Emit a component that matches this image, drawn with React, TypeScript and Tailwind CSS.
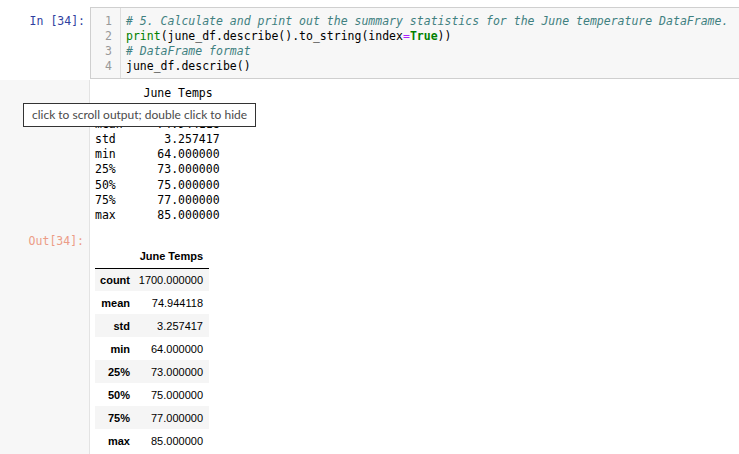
const MONO = { fontFamily: '"DejaVu Sans Mono", "Liberation Mono", monospace' };

const STATS: [string, string][] = [
  ['count', '1700.000000'],
  ['mean', '74.944118'],
  ['std', '3.257417'],
  ['min', '64.000000'],
  ['25%', '73.000000'],
  ['50%', '75.000000'],
  ['75%', '77.000000'],
  ['max', '85.000000'],
];

// pandas to_string() style text block
const TEXT_OUT = [
  '       June Temps',
  ...STATS.map(([k, v]) => k.padEnd(5, ' ') + v.padStart(13, ' ')),
].join('\n');

function CodeCell() {
  return (
    <div className="flex w-[745px] pt-[7px]">
      <div
        className="w-[90px] shrink-0 pr-[5px] pt-[6.5px] text-right text-[11.5px] leading-[15px] text-[#303F9F]"
        style={MONO}
      >
        In&nbsp;[34]:
      </div>
      <div className="flex h-[72px] flex-1 border border-[#cfcfcf] bg-[#f7f7f7] text-[11.5px] leading-[15px]" style={MONO}>
        <div className="w-[30px] shrink-0 border-r border-[#dddddd] pr-[8px] pt-[5.5px] text-right text-[#999999]">
          <div>1</div>
          <div>2</div>
          <div>3</div>
          <div>4</div>
        </div>
        <div className="whitespace-pre pl-[5px] pt-[5.5px] text-black">
          <div className="italic text-[#408080]"># 5. Calculate and print out the summary statistics for the June temperature DataFrame.</div>
          <div>
            <span className="text-[#008000]">print</span>(june_df.describe().to_string(index
            <span className="text-[#AA22FF]">=</span>
            <span className="font-bold text-[#008000]">True</span>))
          </div>
          <div className="italic text-[#408080]"># DataFrame format</div>
          <div>june_df.describe()</div>
        </div>
      </div>
    </div>
  );
}

function StatsTable() {
  return (
    <table
      className="mt-[15px] table-fixed border-collapse text-[11px] text-black"
      style={{ fontFamily: '"Liberation Sans", Arial, sans-serif' }}
    >
      <thead>
        <tr className="h-[23px] border-b border-black">
          <th className="w-[40px]" />
          <th className="w-[74px] pr-[6px] text-right font-bold">June Temps</th>
        </tr>
      </thead>
      <tbody>
        {STATS.map(([k, v], i) => (
          <tr key={k} className={i % 2 === 0 ? 'h-[23px] bg-[#f5f5f5]' : 'h-[23px] bg-white'}>
            <th className="pr-[5px] text-right font-bold">{k}</th>
            <td className="pr-[6px] text-right">{v}</td>
          </tr>
        ))}
      </tbody>
    </table>
  );
}

export default function App() {
  return (
    <div className="relative h-[454px] w-[739px] overflow-hidden bg-white">
      <CodeCell />

      {/* ── Output area (prompt column shows hover state) ─────────────── */}
      <div className="mt-[1px]">
        <div className="flex">
          <div className="w-[90px] shrink-0 border-r border-[#e3e3e3] bg-[#f7f7f7]" />
          <pre className="pb-[7px] pl-[5px] pt-[6px] text-[11.5px] leading-[15.25px] text-black" style={MONO}>
            {TEXT_OUT}
          </pre>
        </div>
        <div className="flex h-[230px]">
          <div
            className="w-[90px] shrink-0 border-r border-[#e3e3e3] bg-[#f7f7f7] pr-[5px] pt-[3.5px] text-right text-[11.5px] leading-[15px] text-[#ec9c86]"
            style={MONO}
          >
            Out[34]:
          </div>
          <div className="pl-[5px]">
            <StatsTable />
          </div>
        </div>
      </div>

      {/* ── Tooltip over the output prompt ─────────────────────────────── */}
      <div
        className="absolute left-[23px] top-[103px] flex h-[24px] w-[233px] items-center whitespace-nowrap border border-[#333333] bg-white pl-[8px] text-[12px] text-[#4a4a4a]"
        style={{ fontFamily: 'Lato, "Liberation Sans", sans-serif' }}
      >
        click to scroll output; double click to hide
      </div>
    </div>
  );
}
